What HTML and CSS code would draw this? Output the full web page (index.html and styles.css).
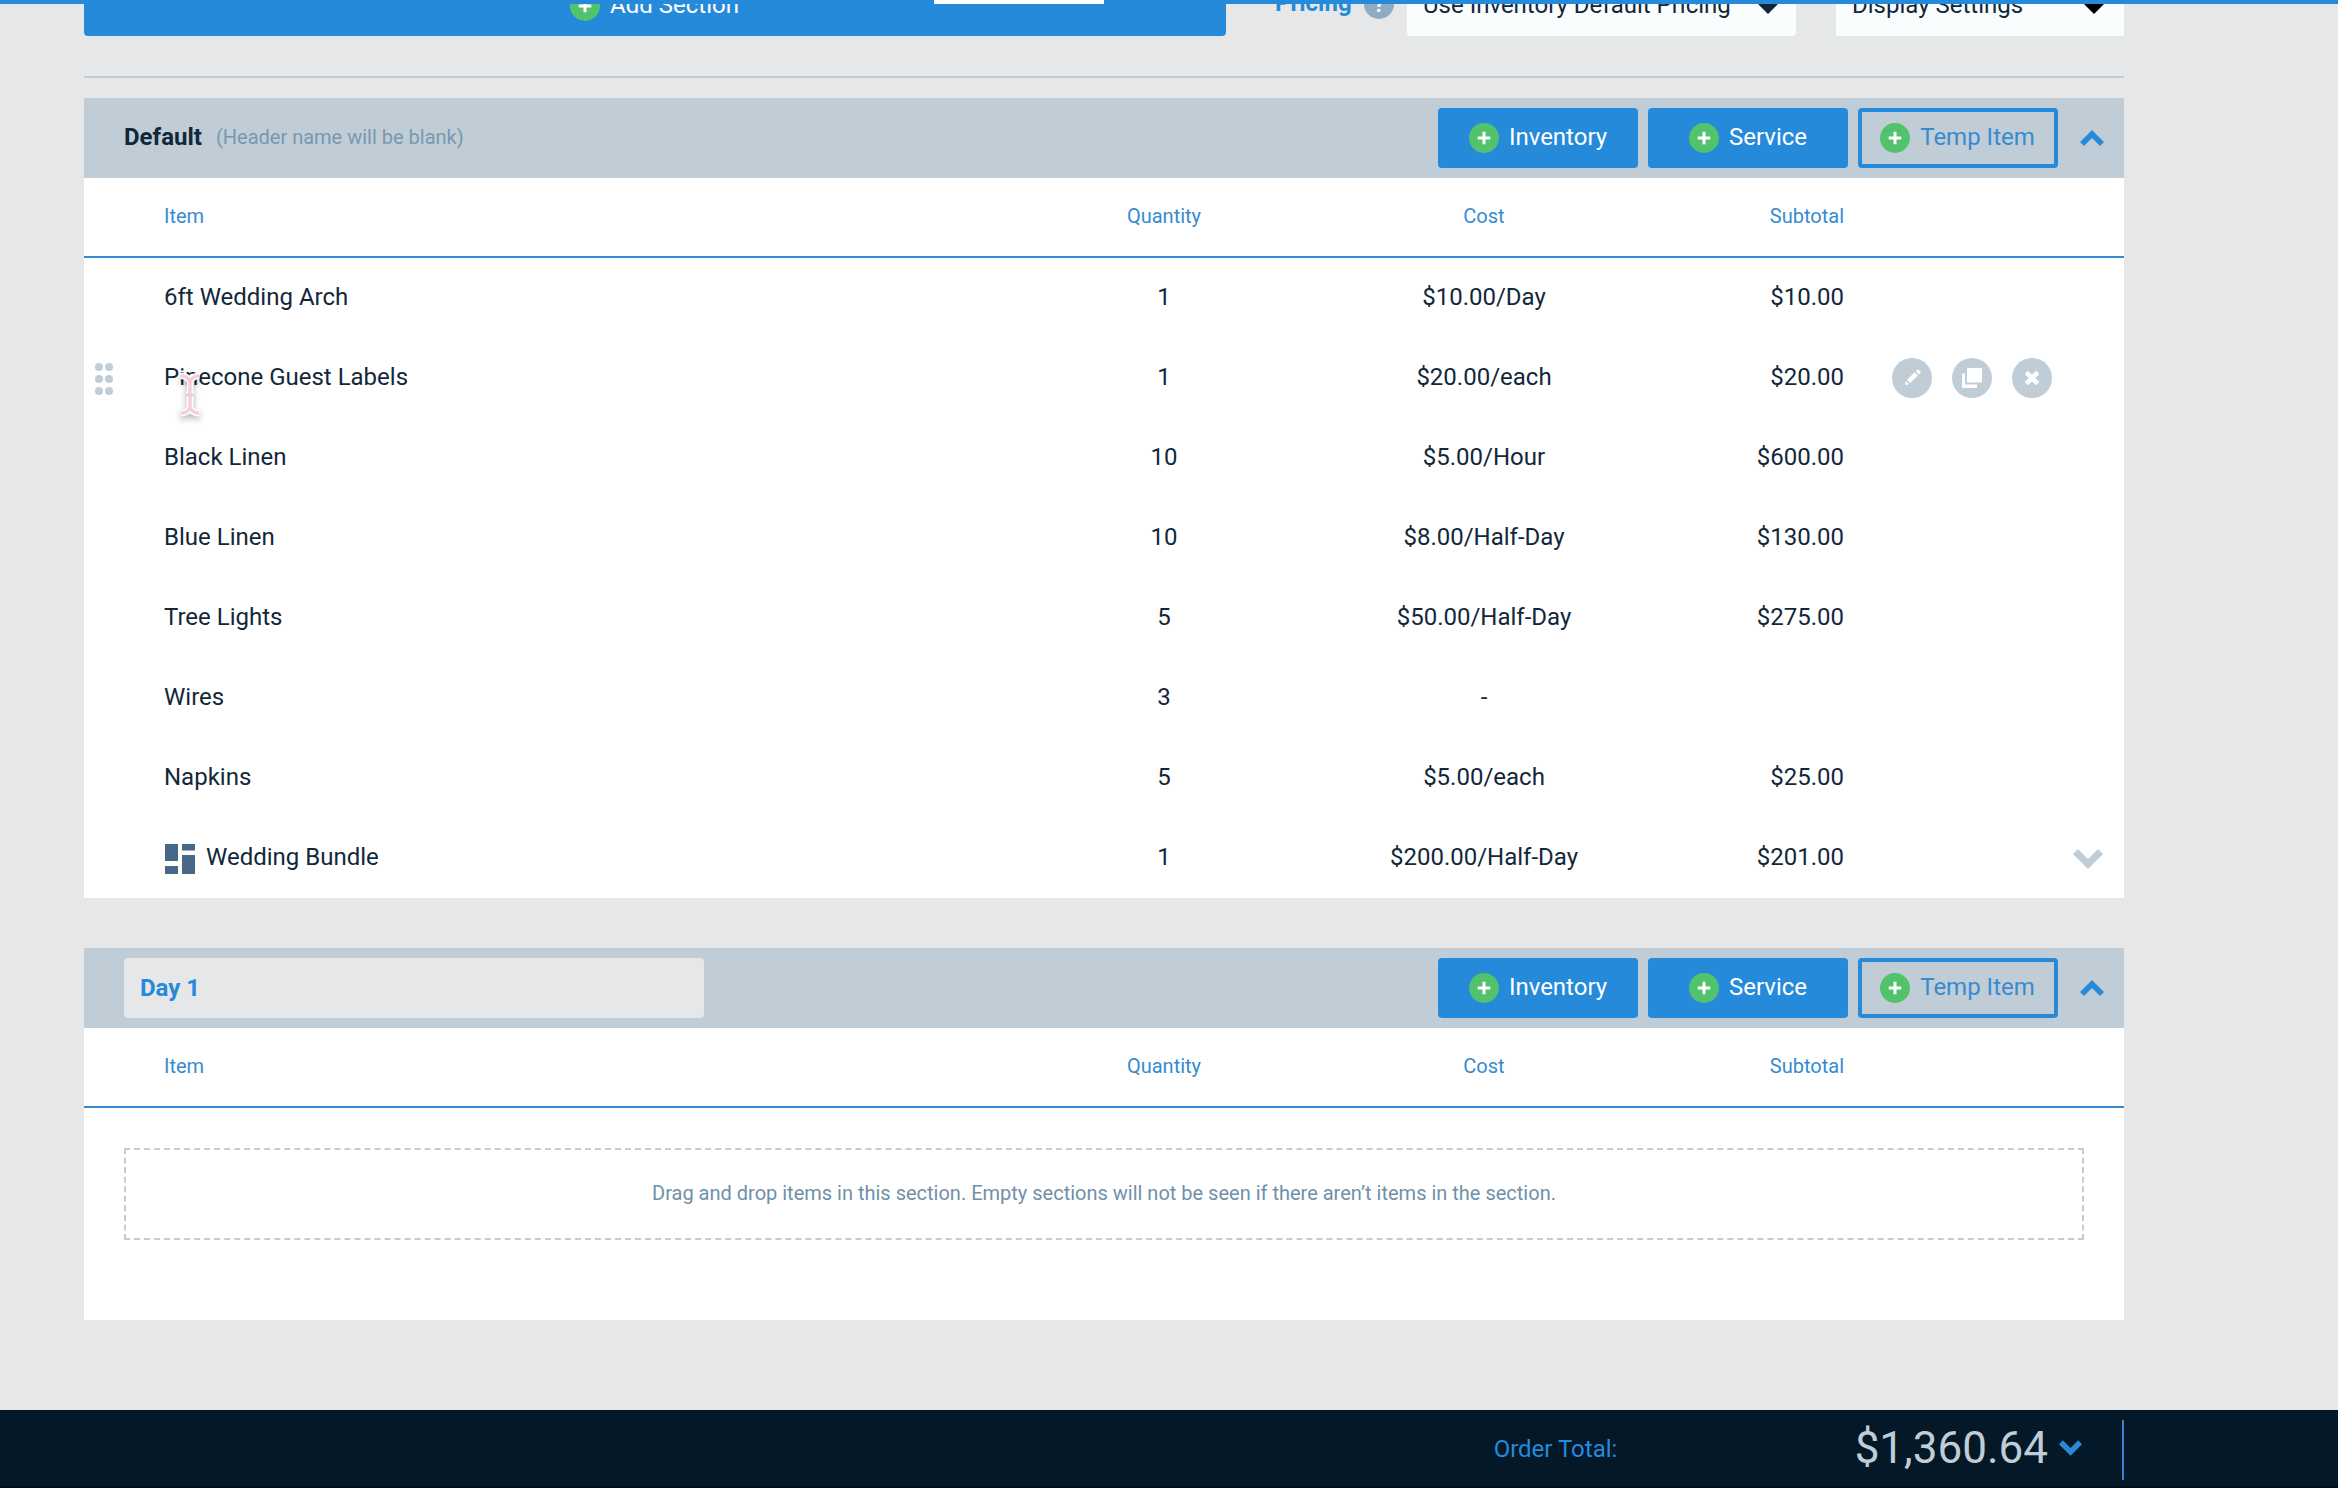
FILE: index.html
```html
<!DOCTYPE html>
<html lang="en">
<head>
<meta charset="utf-8">
<title>Order Items</title>
<link rel="stylesheet" href="styles.css">
</head>
<body>
<svg class="defs" aria-hidden="true">
  <symbol id="plus" viewBox="0 0 30 30"><circle cx="15" cy="15" r="15" fill="#52c26c"/><path d="M15 8.7v12.6M8.7 15h12.6" stroke="#fff" stroke-width="3"/></symbol>
  <symbol id="up" viewBox="0 0 24 16"><path d="M0 12 12 0l12 12-4 4-8-8-8 8z" fill="currentColor"/></symbol>
  <symbol id="down" viewBox="0 0 30 20"><path d="M0 5 5 0l10 10L25 0l5 5-15 15z" fill="currentColor"/></symbol>
  <symbol id="caret" viewBox="0 0 20 15"><path d="M0 5 5 0l5 5 5-5 5 5-10 10z" fill="currentColor"/></symbol>
</svg>
<div class="progress"><div class="progress-gap"></div></div>
<main class="content">
  <div class="toolbar">
    <button class="btn btn-add"><svg class="plus"><use href="#plus"/></svg><span>Add Section</span></button>
    <div class="pricing-label">Pricing</div>
    <div class="help">?</div>
    <div class="select select-pricing"><span>Use Inventory Default Pricing</span><svg class="caret"><use href="#caret"/></svg></div>
    <div class="select select-display"><span>Display Settings</span><svg class="caret caret-black"><use href="#caret"/></svg></div>
  </div>

  <section class="section">
    <header class="section-head">
      <h2 class="section-title">Default</h2><span class="section-note">(Header name will be blank)</span>
      <div class="section-actions">
        <button class="btn"><svg class="plus"><use href="#plus"/></svg><span>Inventory</span></button>
        <button class="btn"><svg class="plus"><use href="#plus"/></svg><span>Service</span></button>
        <button class="btn btn-outline"><svg class="plus"><use href="#plus"/></svg><span>Temp Item</span></button>
        <svg class="collapse"><use href="#up"/></svg>
      </div>
    </header>
    <div class="row row-head"><div></div><div>Item</div><div class="qty">Quantity</div><div class="cost">Cost</div><div class="sub">Subtotal</div></div>
    <div class="row"><div></div><div><span>6ft Wedding Arch</span></div><div class="qty">1</div><div class="cost">$10.00/Day</div><div class="sub">$10.00</div></div>
    <div class="row">
      <svg class="drag" viewBox="0 0 18 32"><g fill="#c0cdd6"><circle cx="4" cy="4" r="4"/><circle cx="14" cy="4" r="4"/><circle cx="4" cy="16" r="4"/><circle cx="14" cy="16" r="4"/><circle cx="4" cy="28" r="4"/><circle cx="14" cy="28" r="4"/></g></svg>
      <div class="hovered"><span>Pinecone Guest Labels</span>
        <svg class="cursor" viewBox="0 0 24 46"><path d="M2.500 4H5Q10.500 5 12 10Q13.500 5 19 4h2.500M12 9V36M8 23h8M2.500 41H5Q10.500 40 12 35Q13.500 40 19 41h2.500" fill="none" stroke="#fff" stroke-width="6.500"/><path d="M3 4H5Q10.500 5 12 10Q13.500 5 19 4h2M12 9V36M8 23h8M3 41H5Q10.500 40 12 35Q13.500 40 19 41h2" fill="none" stroke="#f3cfdd" stroke-width="3.500"/></svg>
      </div>
      <div class="qty">1</div><div class="cost">$20.00/each</div><div class="sub">$20.00</div>
      <div class="tools">
        <svg viewBox="0 0 40 40"><circle cx="20" cy="20" r="20"/><path class="ink" d="m13 27 .8-4 3.200 3.200zM14.800 21.800l7.900-7.500 3.200 3.300-7.800 7.500zM23.800 13.300l1.700-1.500q.7-.5 1.300.1l1.700 1.700q.6.700 0 1.300L27 16.500z"/></svg>
        <svg viewBox="0 0 40 40"><circle cx="20" cy="20" r="20"/><path class="ink" d="M15 10h15v14.500H15zM10 15.500h3v11h12V30H10z"/></svg>
        <svg viewBox="0 0 40 40"><circle cx="20" cy="20" r="20"/><path d="m14.300 14.300 11.400 11.400m0-11.400L14.300 25.700" stroke="#fff" stroke-width="4.600"/></svg>
      </div>
    </div>
    <div class="row"><div></div><div><span>Black Linen</span></div><div class="qty">10</div><div class="cost">$5.00/Hour</div><div class="sub">$600.00</div></div>
    <div class="row"><div></div><div><span>Blue Linen</span></div><div class="qty">10</div><div class="cost">$8.00/Half-Day</div><div class="sub">$130.00</div></div>
    <div class="row"><div></div><div><span>Tree Lights</span></div><div class="qty">5</div><div class="cost">$50.00/Half-Day</div><div class="sub">$275.00</div></div>
    <div class="row"><div></div><div><span>Wires</span></div><div class="qty">3</div><div class="cost">-</div></div>
    <div class="row"><div></div><div><span>Napkins</span></div><div class="qty">5</div><div class="cost">$5.00/each</div><div class="sub">$25.00</div></div>
    <div class="row"><div></div><div class="bundle"><svg viewBox="0 0 30 30"><path d="M0 0h13v17H0zM0 22h13v8H0zM17 0h13v6.500H17zM17 11h13v19H17z" fill="#476987"/></svg><span>Wedding Bundle</span></div><div class="qty">1</div><div class="cost">$200.00/Half-Day</div><div class="sub">$201.00</div><svg class="expand"><use href="#down"/></svg></div>
  </section>

  <section class="section section-empty">
    <header class="section-head">
      <div class="name-input">Day 1</div>
      <div class="section-actions">
        <button class="btn"><svg class="plus"><use href="#plus"/></svg><span>Inventory</span></button>
        <button class="btn"><svg class="plus"><use href="#plus"/></svg><span>Service</span></button>
        <button class="btn btn-outline"><svg class="plus"><use href="#plus"/></svg><span>Temp Item</span></button>
        <svg class="collapse"><use href="#up"/></svg>
      </div>
    </header>
    <div class="row row-head"><div></div><div>Item</div><div class="qty">Quantity</div><div class="cost">Cost</div><div class="sub">Subtotal</div></div>
    <div class="dropzone">Drag and drop items in this section. Empty sections will not be seen if there aren’t items in the section.</div>
  </section>
</main>
<footer class="total-bar">
  <div class="total-inner">
    <span class="total-label">Order Total:</span>
    <span class="total-value">$1,360.64</span>
    <svg class="total-caret"><use href="#down"/></svg>
  </div>
</footer>
</body>
</html>
```
FILE: styles.css
```css
* { box-sizing: border-box; }
body {
  margin: 0;
  height: 1488px;
  overflow: hidden;
  display: flex;
  flex-direction: column;
  background: #e5e7e9;
  color: #12283a;
  font: 24px/28px Roboto, "Liberation Sans", sans-serif;
}
svg { display: block; flex: none; }
.defs { position: absolute; width: 0; height: 0; }

.progress {
  position: relative;
  z-index: 2;
  flex: none;
  height: 4px;
  padding-left: 934px;
  background: #268adb;
}
.progress-gap { width: 170px; height: 4px; background: #fff; }

.content { flex: 1; width: 2040px; margin-left: 84px; }

/* The toolbar is scrolled partly under the progress strip. */
.toolbar {
  display: flex;
  align-items: flex-end;
  height: 74px;
  padding-bottom: 40px;
  border-bottom: 2px solid #c0cdd3;
}
.btn {
  display: flex;
  align-items: center;
  justify-content: center;
  gap: 10px;
  flex: none;
  width: 200px;
  height: 60px;
  padding: 0;
  border: 0;
  border-radius: 4px;
  background: #268adb;
  color: #fff;
  font: inherit;
}
.btn span { padding-bottom: 2px; }
.btn-outline { padding-right: 1px; border: 4px solid #268adb; background: none; color: #368bd1; }
.btn-add { width: 1142px; padding-right: 1px; }
.plus { width: 30px; height: 30px; }
.pricing-label {
  width: 89px;
  height: 60px;
  margin-left: 49px;
  padding-top: 13px;
  color: #268adb;
  font-weight: 700;
}
.help {
  width: 30px;
  height: 30px;
  margin-right: 13px;
  margin-bottom: 17px;
  border-radius: 50%;
  background: #8facc2;
  color: #fff;
  font-weight: 700;
  font-size: 22px;
  line-height: 32px;
  text-align: center;
}
.select {
  display: flex;
  align-items: center;
  justify-content: space-between;
  height: 60px;
  padding: 0 18px 2px 16px;
  background: #fafdfe;
}
.select-pricing { width: 389px; border-radius: 4px; }
.select-display { width: 288px; margin-left: 40px; padding-right: 20px; }
.caret { width: 20px; height: 15px; margin-top: 3px; }
.caret-black { color: #000; }

.section { margin-top: 20px; background: #fff; }
.section-head {
  display: flex;
  align-items: center;
  height: 80px;
  padding: 0 20px 0 40px;
  background: #c0cdd6;
}
.section-title { margin: 0 14px 2px 0; font-size: 24px; line-height: 28px; font-weight: 700; }
.section-note { padding-bottom: 3px; color: #7898b0; font-size: 20px; }
.section-actions { display: flex; align-items: center; gap: 10px; margin-left: auto; }
.collapse { width: 24px; height: 16px; margin-left: 12px; color: #268adb; }

.row {
  display: grid;
  grid-template-columns: 80px 920px 160px 480px 120px 48px 1fr;
  align-items: center;
  height: 80px;
}
.row > div { padding-bottom: 2px; }
.row-head { border-bottom: 2px solid #368bd1; color: #368bd1; font-size: 20px; }
.qty, .cost { text-align: center; }
.sub { text-align: right; }
.drag { width: 18px; height: 32px; margin: 2px 0 0 11px; }
.hovered { position: relative; }
.cursor {
  position: absolute;
  left: 14px;
  top: 9px;
  width: 24px;
  height: 46px;
  overflow: visible;
  filter: drop-shadow(0 3px 3px rgba(0, 0, 0, .3));
}
.row > .tools { grid-column: 7; display: flex; gap: 20px; padding: 0; }
.tools svg { width: 40px; height: 40px; fill: #c0cdd6; }
.tools .ink { fill: #fff; }
.bundle { display: flex; align-items: center; gap: 11px; padding-left: 1px; }
.bundle svg { width: 30px; height: 30px; margin-top: 4px; }
.expand { grid-column: 7; justify-self: end; width: 30px; height: 20px; margin-right: 21px; margin-top: 2px; color: #c0cdd6; }

.section-empty { height: 372px; margin-top: 50px; }
.name-input {
  width: 580px;
  height: 60px;
  padding: 16px;
  border-radius: 4px;
  background: #e5e7e9;
  color: #268adb;
  font-weight: 700;
}
.dropzone {
  height: 92px;
  margin: 40px;
  border: 2px dashed #c0cdd6;
  color: #7090a9;
  font-size: 20px;
  line-height: 86px;
  text-align: center;
}

.total-bar {
  flex: none;
  height: 78px;
  padding-top: 10px;
  border-bottom: 2px solid #000c18;
  background: #041827;
}
.total-inner {
  display: flex;
  align-items: center;
  width: 2124px;
  height: 60px;
  padding-right: 40px;
  border-right: 2px solid #3b82d0;
}
.total-label { margin-left: auto; width: 361px; padding-bottom: 2px; color: #268adb; }
.total-value { color: #c0cdd6; font-size: 44px; line-height: 52px; padding-bottom: 4px; }
.total-caret { width: 23px; height: 16px; margin-left: 11px; margin-top: -4px; color: #268adb; }
```
